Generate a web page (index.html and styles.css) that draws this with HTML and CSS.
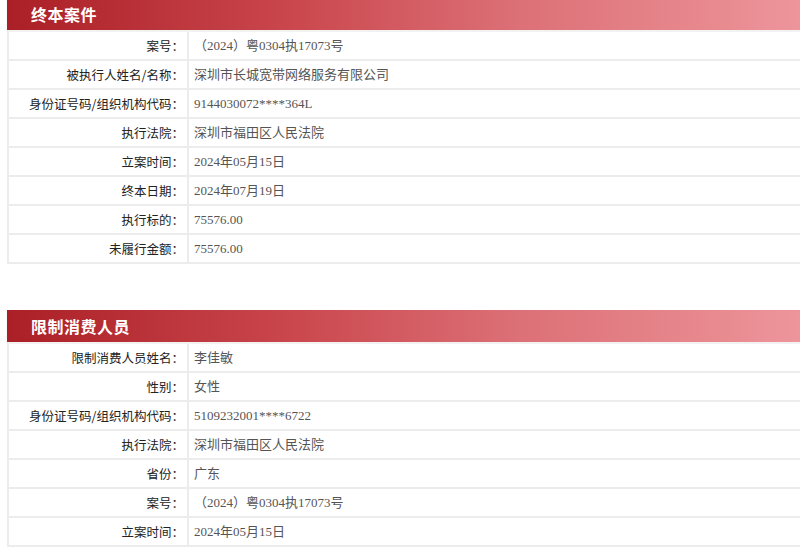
FILE: index.html
```html
<!DOCTYPE html>
<html lang="zh-CN">
<head>
<meta charset="utf-8">
<title>终本案件</title>
<link rel="stylesheet" href="styles.css">
</head>
<body>
<div class="page">
  <section class="block first">
    <h2 class="block-title">终本案件</h2>
    <div class="table">
      <div class="row"><div class="label">案号：</div><div class="value">（2024）粤0304执17073号</div></div>
      <div class="row"><div class="label">被执行人姓名/名称：</div><div class="value">深圳市长城宽带网络服务有限公司</div></div>
      <div class="row"><div class="label">身份证号码/组织机构代码：</div><div class="value">9144030072****364L</div></div>
      <div class="row"><div class="label">执行法院：</div><div class="value">深圳市福田区人民法院</div></div>
      <div class="row"><div class="label">立案时间：</div><div class="value">2024年05月15日</div></div>
      <div class="row"><div class="label">终本日期：</div><div class="value">2024年07月19日</div></div>
      <div class="row"><div class="label">执行标的：</div><div class="value">75576.00</div></div>
      <div class="row"><div class="label">未履行金额：</div><div class="value">75576.00</div></div>
    </div>
  </section>
  <section class="block second">
    <h2 class="block-title">限制消费人员</h2>
    <div class="table">
      <div class="row"><div class="label">限制消费人员姓名：</div><div class="value">李佳敏</div></div>
      <div class="row"><div class="label">性别：</div><div class="value">女性</div></div>
      <div class="row"><div class="label">身份证号码/组织机构代码：</div><div class="value">5109232001****6722</div></div>
      <div class="row"><div class="label">执行法院：</div><div class="value">深圳市福田区人民法院</div></div>
      <div class="row"><div class="label">省份：</div><div class="value">广东</div></div>
      <div class="row"><div class="label">案号：</div><div class="value">（2024）粤0304执17073号</div></div>
      <div class="row"><div class="label">立案时间：</div><div class="value">2024年05月15日</div></div>
    </div>
  </section>
</div>
</body>
</html>
```
FILE: styles.css
```css
html, body {
  margin: 0;
  padding: 0;
  background: #ffffff;
}
body {
  font-family: "Liberation Serif", "Noto Sans CJK SC", serif;
  font-size: 13px;
  color: #444;
  overflow: hidden;
}
.page {
  padding-left: 7px;
}
.block.first {
  margin-top: -2px;
}
.block.second {
  margin-top: 46px;
}
.block-title {
  margin: 0;
  height: 32px;
  line-height: 32px;
  padding-left: 24px;
  font-family: "Noto Sans CJK SC", sans-serif;
  font-size: 16px;
  font-weight: 700;
  color: #ffffff;
  letter-spacing: 0.5px;
  background: linear-gradient(to right, #ab1f26 0%, #c9464c 35%, #dc7177 65%, #ed959b 100%);
  box-shadow: 0 1px 2px rgba(0,0,0,0.08);
}
.table {
  border-left: 2px solid #ececec;
  border-top: 2px solid #f2f2f2;
  background: #fff;
}
.row {
  display: grid;
  grid-template-columns: 180px 1fr;
  height: 29px;
  box-sizing: border-box;
  border-bottom: 2px solid #ececec;
}
.label {
  border-right: 2px solid #ececec;
  text-align: right;
  padding-right: 3px;
  line-height: 27px;
  font-family: "Noto Sans CJK SC", sans-serif;
  font-size: 12.5px;
  font-weight: 400;
  color: #222;
  white-space: nowrap;
}
.value {
  padding-left: 5px;
  line-height: 27px;
  font-family: "Liberation Serif", "Noto Sans CJK SC", serif;
  font-size: 13px;
  color: #555;
  white-space: nowrap;
}
```
